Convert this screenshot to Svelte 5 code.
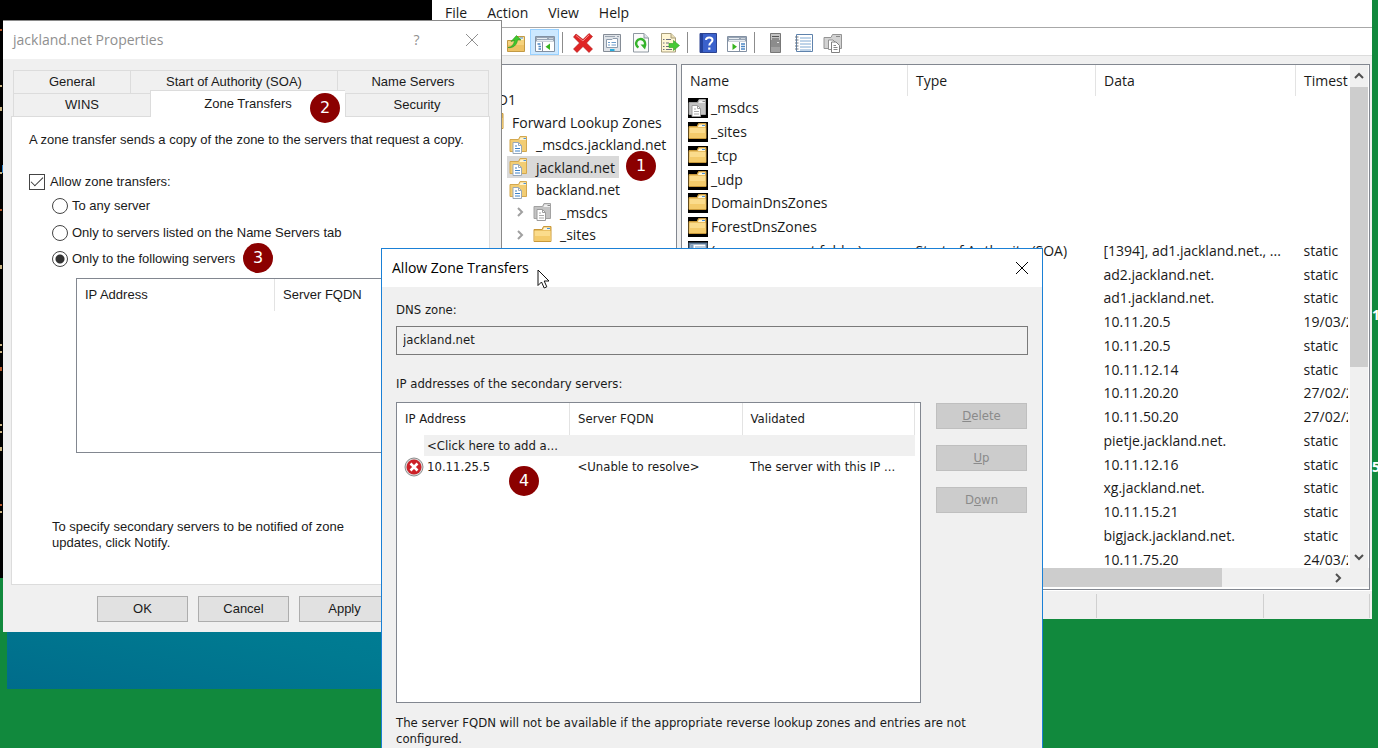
<script lang="ts">
	interface TreeItem {
		name: string;
		level: number;
		icon?: string;
		selected?: boolean;
	}

	interface DnsRecord {
		name?: string;
		icon?: string;
		type?: string;
		data?: string;
		time?: string;
	}

	const menus = ['File', 'Action', 'View', 'Help'];

	const tools = [
		['up', 'tree'],
		['delete', 'properties', 'refresh', 'export'],
		['help', 'pane'],
		['server', 'list', 'copy']
	];

	const tree: TreeItem[] = [
		{ name: 'AD1', level: 0 },
		{ name: 'Forward Lookup Zones', level: 1, icon: 'folder' },
		{ name: '_msdcs.jackland.net', level: 2, icon: 'zone' },
		{ name: 'jackland.net', level: 2, icon: 'zone', selected: true },
		{ name: 'backland.net', level: 2, icon: 'zone' },
		{ name: '_msdcs', level: 3, icon: 'delegation' },
		{ name: '_sites', level: 3, icon: 'folder' }
	];

	const records: DnsRecord[] = [
		{ name: '_msdcs', icon: 'delegation' },
		{ name: '_sites', icon: 'folder' },
		{ name: '_tcp', icon: 'folder' },
		{ name: '_udp', icon: 'folder' },
		{ name: 'DomainDnsZones', icon: 'folder' },
		{ name: 'ForestDnsZones', icon: 'folder' },
		{
			name: '(same as parent folder)',
			icon: 'record',
			type: 'Start of Authority (SOA)',
			data: '[1394], ad1.jackland.net., ...',
			time: 'static'
		},
		{ data: 'ad2.jackland.net.', time: 'static' },
		{ data: 'ad1.jackland.net.', time: 'static' },
		{ data: '10.11.20.5', time: '19/03/2' },
		{ data: '10.11.20.5', time: 'static' },
		{ data: '10.11.12.14', time: 'static' },
		{ data: '10.11.20.20', time: '27/02/2' },
		{ data: '10.11.50.20', time: '27/02/2' },
		{ data: 'pietje.jackland.net.', time: 'static' },
		{ data: '10.11.12.16', time: 'static' },
		{ data: 'xg.jackland.net.', time: 'static' },
		{ data: '10.11.15.21', time: 'static' },
		{ data: 'bigjack.jackland.net.', time: 'static' },
		{ data: '10.11.75.20', time: '24/03/2' }
	];

	const specks = [31, 87, 109, 174, 211, 267, 346, 353, 369, 426, 433, 449, 506, 513];

	let allowTransfers = $state(true);
	let target = $state('listed');
	let zone = $state('jackland.net');
</script>

{#snippet icon(name: string)}
	<svg class="icon" viewBox="0 0 20 20" width="20" height="20" aria-hidden="true">
		{#if name === 'folder'}
			<path d="M1 4.5V16.5H18V1.5H10.500L9 4.5Z" fill="#e9bf62" stroke="#c9993a" />
			<path d="M11 2.500H17V5H10Z" fill="#fff6d8" />
			<path d="M14 3.500H17" stroke="#4b93d8" />
			<path d="M1.500 6H17.500V16H1.500Z" fill="#fbdc8c" />
			<path d="M2 11H17.500V16H2Z" fill="#f4cb6b" />
		{:else if name === 'zone' || name === 'delegation'}
			{@const gray = name === 'delegation'}
			<path d="M1 4.5V16.5H17.500V1.5H11L9.5 4.5Z" fill={gray ? '#c3c3c3' : '#f2cd74'} stroke={gray ? '#a2a2a2' : '#d3a850'} />
			<path d="M11.5 2.5H17V5H10.5Z" fill={gray ? '#eee' : '#fff3cf'} />
			<path d="M14.5 3.5H17" stroke={gray ? '#888' : '#4b93d8'} />
			<path d="M4 7.5H9.500L12.500 10.500V18.500H4Z" fill="#fff" stroke={gray ? '#9c9c9c' : '#98a8b8'} />
			<path d="M9.500 7.5V10.500H12.500" fill="none" stroke={gray ? '#9c9c9c' : '#98a8b8'} />
			<path d="M6 11H8M6 13.500H11M6 16H11" stroke={gray ? '#aaa' : '#3c82c8'} />
		{:else if name === 'record'}
			<path d="M1.5 2.5H18.5V18.5H1.5Z" fill="#fff" stroke="#5c7896" stroke-width="2" />
			<path d="M3 4H5V18H3ZM7 6H17" fill="#7f9dbd" stroke="#7f9dbd" />
		{:else if name === 'up'}
			<path d="M1.5 7.5V18.5H18.5V3.5H11L10 7.5Z" fill="#f6d27c" stroke="#c39a45" />
			<path d="M12 4.5H17.5V7H11Z" fill="#fff6d8" />
			<path d="M13.500 5H17" stroke="#4b93d8" />
			<path d="M2 12H18V18H2Z" fill="#eec264" />
			<path d="M2 14.500C6 14 8 11.500 8.500 7.500L5 8.500L10.500 2.500L15 7L11.500 7C11 12 7 15.500 2 14.500Z" fill="#3fc72c" stroke="#2b9420" stroke-width=".6" />
		{:else if name === 'tree' || name === 'pane'}
			<path d="M.5 3.500H19.500V18.500H.5Z" fill="#fff" stroke="#8290a2" />
			<path d="M1 4H19V8.500H1Z" fill="#98a5b5" />
			<path d="M2 5.500H12M2 7.500H18" stroke="#e8edf2" />
			<path d="M14.500 5.500H15.500M16.500 5.500H17.500" stroke="#fff" />
			{#if name === 'tree'}
				<path d="M7.500 9V18" stroke="#8290a2" />
				<path d="M2.500 11H5.500M3.500 13.500H6M3.500 16H6" stroke="#4b86c4" stroke-width="1.300" />
				<path d="M15 10.500V17L10.500 13.700Z" fill="#36b51f" />
			{:else}
				<path d="M12.500 9V18" stroke="#8290a2" />
				<path d="M14 11H18M14 13.500H18M14 16H18" stroke="#4b86c4" stroke-width="1.300" />
				<path d="M5.500 10.500V17L10 13.700Z" fill="#36b51f" />
			{/if}
		{:else if name === 'delete'}
			<path d="M3 1L10 6.500L16 .5L19.500 3.500L13.500 10L19.500 16L16 19.500L10 13.500L4 19.500L.5 16L6.500 10L.5 4Z" fill="#e02424" stroke="#b01414" stroke-width=".6" />
			<path d="M3 2.500L10 8L16 2" fill="none" stroke="#f58080" />
		{:else if name === 'properties'}
			<path d="M1.500 1.500H18.500V18.500H1.500Z" fill="#dfe3e8" stroke="#858c96" />
			<path d="M3 3.500H13M15 3.500H17" stroke="#9aa4b0" />
			<path d="M4.500 6.500H10L11 5.500H15.500V14.500H4.500Z" fill="#fff" stroke="#8e9cac" />
			<path d="M6 9.500H8M9.500 9.500H14M6 12H8M9.500 12H14" stroke="#6d9dcc" />
			<path d="M8 17H12.500" stroke="#28aee0" stroke-width="2" />
		{:else if name === 'refresh'}
			<path d="M2.500 .5H13L17.500 5V19H2.500Z" fill="#fbfbfb" stroke="#8f98a1" />
			<path d="M13 .5V5H17.500" fill="#dde2e7" stroke="#8f98a1" />
			<path d="M7.500 14.500A4.500 4.500 0 1 1 13 13.500" fill="none" stroke="#35b32b" stroke-width="2.400" />
			<path d="M9.500 11.500L15.500 11.500L14 16.500Z" fill="#35b32b" />
		{:else if name === 'export'}
			<path d="M1.500 .5H11L15.500 5V19H1.500Z" fill="#fff6d4" stroke="#a89e7c" />
			<path d="M11 .5V5H15.500" fill="#e9ddb2" stroke="#a89e7c" />
			<path d="M3 6.500H4.500M6 6.500H11M3 10H4.500M6 10H9M3 13.500H4.500M6 13.500H9M3 16.500H4.500M6 16.500H12" stroke="#6a6e7e" />
			<path d="M9 10.500H13.500V7.500L19.500 12.500L13.500 17.500V14.500H9Z" fill="#45c935" stroke="#2e9e24" stroke-width=".6" />
		{:else if name === 'help'}
			<path d="M2 .5H18.500V19.500H2Z" fill="#3b62cc" stroke="#2c4390" />
			<path d="M2 1H5V19H2Z" fill="#24429c" />
			<path d="M8 7C8 3.500 14.500 3.500 14.500 7C14.500 9.500 11.300 9.500 11.300 12.500" fill="none" stroke="#fff" stroke-width="2" />
			<path d="M10.200 14.500H12.400V16.700H10.200Z" fill="#fff" />
		{:else if name === 'server'}
			<path d="M5.500 .5H15.500V19.500H5.500Z" fill="#8c8c8c" stroke="#777" />
			<path d="M6 1H15V7H6Z" fill="#c4c4c4" />
			<path d="M7 3.500H14M7 6H14" stroke="#555" />
			<path d="M12 9.500H14" stroke="#ddd" />
			<path d="M6 14H15V19H6Z" fill="#a2a2a2" />
		{:else if name === 'list'}
			<path d="M2.500 1.500H18.500V18.500H2.500Z" fill="#fff" stroke="#5e82ac" />
			<path d="M6 5H17M6 8H17M6 11H17M6 14H17M6 17H17" stroke="#7fa8d2" />
			<path d="M1 4H4.500M1 7H4.500M1 10H4.500M1 13H4.500M1 16H4.500" stroke="#6f7781" />
		{:else}
			<path d="M1 4.500V15.500H18.500V1.500H9.500L8 4.500Z" fill="#d2d2d2" stroke="#949494" />
			<path d="M13 3.500H17" stroke="#888" />
			<path d="M5.500 7H10L12.500 9.500V16.500H5.500Z" fill="#fff" stroke="#909090" />
			<path d="M8.500 9H13L16.500 12.500V19.500H8.500Z" fill="#fff" stroke="#808080" />
			<path d="M10.500 12.500H13M10.500 14.500H14.500M10.500 16.500H14.500" stroke="#888" />
		{/if}
	</svg>
{/snippet}

{#snippet cross()}
	<svg viewBox="0 0 14 14" width="14" height="14" aria-hidden="true">
		<path d="M1 1L13 13M13 1L1 13" stroke="currentColor" fill="none" />
	</svg>
{/snippet}

{#snippet chevron(turn: string)}
	<svg class="chevron {turn}" viewBox="0 0 10 10" width="10" height="10" aria-hidden="true">
		<path d="M1 7L5 3L9 7" stroke="currentColor" stroke-width="2" fill="none" />
	</svg>
{/snippet}

<main class="desktop">
	<div class="terminal">
		<svg width="3" height="578" aria-hidden="true">
			{#each specks as y, i}
				<rect x="0" y={y - 2} width="2" height={i % 3 === 2 ? 4 : 2} fill={i % 4 === 0 ? '#b5562a' : '#c9b382'} />
			{/each}
			<rect x="2" y="165" width="1" height="8" fill="#2a7cc0" />
		</svg>
	</div>
	<div class="wallpaper"></div>
	<div class="side-label first">1</div>
	<div class="side-label second">5</div>

	<section class="window console">
		<nav class="menubar">
			{#each menus as menu}
				<button>{menu}</button>
			{/each}
		</nav>
		<div class="toolbar">
			{#each tools as group}
				<div class="group">
					{#each group as tool}
						<button class:active={tool === 'tree'} aria-label={tool}>{@render icon(tool)}</button>
					{/each}
				</div>
			{/each}
		</div>
		<div class="panes">
			<ul class="tree">
				{#each tree as item}
					<li class="level-{item.level}">
						{#if item.level === 3}
							{@render chevron('right')}
						{/if}
						<span class="node" class:selected={item.selected}>
							{#if item.icon}
								{@render icon(item.icon)}
							{/if}
							<span>{item.name}</span>
						</span>
					</li>
				{/each}
			</ul>
			<div class="list">
				<div class="list-body">
					<div class="list-view">
						<table>
							<thead>
								<tr>
									<th class="col-name">Name</th>
									<th class="col-type">Type</th>
									<th class="col-data">Data</th>
									<th>Timest</th>
								</tr>
							</thead>
							<tbody>
								{#each records as record}
									<tr>
										<td class="name">
											{#if record.icon}
												<div class="entry-name">
													<span class="tile">{@render icon(record.icon)}</span>
													<span>{record.name}</span>
												</div>
											{/if}
										</td>
										<td>{record.type ?? ''}</td>
										<td>{record.data}</td>
										<td>{record.time}</td>
									</tr>
								{/each}
							</tbody>
						</table>
					</div>
					<div class="vscroll">
						<div class="arrow">{@render chevron('up')}</div>
						<div class="thumb"></div>
						<div class="arrow end">{@render chevron('down')}</div>
					</div>
				</div>
				<div class="hscroll">
					<div class="thumb"></div>
					<div class="arrow">{@render chevron('right')}</div>
				</div>
			</div>
		</div>
		<div class="statusbar">
			<span></span>
			<span></span>
			<span></span>
		</div>
	</section>

	<section class="window properties">
		<header>
			<h1>jackland.net Properties</h1>
			<button aria-label="Help">?</button>
			<button aria-label="Close">{@render cross()}</button>
		</header>
		<div class="tabs">
			<div class="tab-row">
				<button class="general">General</button>
				<button class="soa">Start of Authority (SOA)</button>
				<button class="servers">Name Servers</button>
			</div>
			<div class="tab-row">
				<button class="wins">WINS</button>
				<button class="transfers">Zone Transfers</button>
				<button class="security">Security</button>
			</div>
		</div>
		<div class="page">
			<p class="intro">A zone transfer sends a copy of the zone to the servers that request a copy.</p>
			<label class="check">
				<input type="checkbox" bind:checked={allowTransfers} />
				Allow zone transfers:
			</label>
			<div class="radios">
				<label><input type="radio" value="any" bind:group={target} /> To any server</label>
				<label class="middle"><input type="radio" value="ns" bind:group={target} /> Only to servers listed on the Name Servers tab</label>
				<label><input type="radio" value="listed" bind:group={target} /> Only to the following servers</label>
			</div>
			<div class="server-box">
				<table>
					<thead>
						<tr><th class="ip">IP Address</th><th>Server FQDN</th></tr>
					</thead>
				</table>
			</div>
			<p class="notify">To specify secondary servers to be notified of zone updates, click Notify.</p>
		</div>
		<footer>
			<button>OK</button>
			<button>Cancel</button>
			<button>Apply</button>
		</footer>
	</section>

	<section class="window allow">
		<header>
			<h1>Allow Zone Transfers</h1>
			<button aria-label="Close">{@render cross()}</button>
		</header>
		<div class="content">
			<label for="zone">DNS zone:</label>
			<input id="zone" type="text" readonly bind:value={zone} />
			<p class="caption">IP addresses of the secondary servers:</p>
			<div class="columns">
				<div class="addresses">
					<table>
						<thead>
							<tr>
								<th>IP Address</th>
								<th>Server FQDN</th>
								<th>Validated</th>
							</tr>
						</thead>
						<tbody>
							<tr class="add">
								<td><span class="entry">&lt;Click here to add a...</span></td>
								<td></td>
								<td></td>
							</tr>
							<tr>
								<td>
									<span class="status">
										<svg viewBox="0 0 20 20" width="20" height="20" aria-hidden="true">
											<circle cx="10" cy="10" r="9" fill="#d9d9d9" stroke="#8d8d8d" />
											<circle cx="10" cy="10" r="7.500" fill="#cc2027" />
											<path d="M6.500 6.500L13.500 13.500M13.500 6.500L6.500 13.500" stroke="#fff" stroke-width="2.600" />
										</svg>
										10.11.25.5
									</span>
								</td>
								<td>&lt;Unable to resolve&gt;</td>
								<td>The server with this IP ...</td>
							</tr>
						</tbody>
					</table>
				</div>
				<div class="actions">
					<button disabled><u>D</u>elete</button>
					<button disabled><u>U</u>p</button>
					<button disabled>D<u>o</u>wn</button>
				</div>
			</div>
			<p class="note">The server FQDN will not be available if the appropriate reverse lookup zones and entries are not configured.</p>
		</div>
	</section>

	<div class="callout one">1</div>
	<div class="callout two">2</div>
	<div class="callout three">3</div>
	<div class="callout four">4</div>

	<svg class="cursor" viewBox="0 0 13 20" width="13" height="20" aria-hidden="true">
		<path d="M1 1V16.500L4.500 13L7.200 19L9.800 17.800L7.200 12H12Z" fill="#fff" stroke="#111" />
	</svg>
</main>

<style>
	:global(body) {
		margin: 0;
		background: #11893d;
	}

	.desktop {
		position: relative;
		min-height: 100vh;
		overflow: hidden;
		background: #11893d;
		color: #1a1a1a;
		font-family: 'Open Sans', 'Noto Sans', sans-serif;
		font-size: 14px;
	}

	h1, p, ul {
		margin: 0;
		padding: 0;
		font-weight: 400;
	}

	button {
		padding: 0;
		border: 0;
		background: none;
		color: inherit;
		font: inherit;
	}

	svg {
		display: block;
		flex: none;
	}

	table {
		width: 100%;
		border-collapse: collapse;
		table-layout: fixed;
	}

	th, td {
		padding: 0 0 0 8px;
		font-weight: 400;
		text-align: left;
		white-space: nowrap;
		overflow: hidden;
	}

	.terminal {
		position: absolute;
		top: 0;
		left: 0;
		width: 432px;
		height: 578px;
		background: #000;
	}

	.wallpaper {
		position: absolute;
		top: 600px;
		left: 7px;
		width: 400px;
		height: 89px;
		background: linear-gradient(12deg, #006c8b, #007a91 60%, #007f96);
	}

	.side-label {
		position: absolute;
		left: calc(100% - 6px);
		color: #fff;
		font-size: 14px;
		font-weight: 700;
		line-height: 20px;
	}

	.first {
		top: 305px;
	}

	.second {
		top: 457px;
	}

	.window {
		position: absolute;
		box-sizing: border-box;
		background: #f0f0f0;
	}

	/* DNS Manager */
	.console {
		top: 0;
		left: 432px;
		right: 6px;
	}

	.menubar {
		display: flex;
		gap: 20px;
		box-sizing: border-box;
		height: 28px;
		padding: 0 0 3px 13px;
		background: #fff;
		border-bottom: 1px solid #a8a8a8;
	}

	.toolbar {
		display: flex;
		height: 27px;
		padding-left: 69px;
		background: #fff;
		border-bottom: 1px solid #dcdcdc;
	}

	.group {
		display: flex;
		align-items: flex-end;
	}

	.group + .group {
		margin-left: 3px;
		padding-left: 6px;
		background: linear-gradient(#8c8c8c, #8c8c8c) 0 4px / 1px 21px no-repeat;
	}

	.group button {
		display: grid;
		place-items: center;
		box-sizing: border-box;
		width: 29px;
		height: 26px;
		padding-top: 2px;
	}

	.group .active {
		border: 1px solid #99d1ff;
		background: #cce8ff;
	}

	.panes {
		display: flex;
		gap: 4px;
		height: 526px;
		padding: 8px 2px 0 0;
	}

	.tree {
		box-sizing: border-box;
		flex: none;
		width: 245px;
		padding-top: 23px;
		border: 1px solid #828790;
		background: #fff;
		list-style: none;
		overflow: hidden;
	}

	.tree li {
		display: flex;
		align-items: center;
		height: 23px;
		white-space: nowrap;
	}

	.tree li:nth-child(even) {
		height: 22px;
	}

	.node {
		display: flex;
		align-items: center;
		gap: 7px;
		height: 22px;
		padding: 0 4px 0 2px;
	}

	.selected {
		background: #d9d9d9;
	}

	.level-0 {
		padding-left: 54px;
	}

	.level-1 {
		padding-left: 50px;
	}

	.level-2 {
		padding-left: 74px;
	}

	.level-3 {
		padding-left: 82px;
		gap: 6px;
	}

	.tree .chevron {
		color: #a0a0a0;
	}

	.chevron {
		color: #505050;
	}

	.right {
		transform: rotate(90deg);
	}

	.down {
		transform: rotate(180deg);
	}

	.list {
		display: flex;
		flex: 1;
		flex-direction: column;
		min-width: 0;
		border: 1px solid #828790;
		background: #fff;
	}

	.list-body {
		display: flex;
		flex: 1;
		min-height: 0;
	}

	.list-view {
		flex: 1;
		min-width: 0;
		margin-right: 2px;
		overflow: hidden;
	}

	.list th {
		height: 31px;
		border-right: 1px solid #e3e3e3;
	}

	.list th:last-child {
		border: 0;
	}

	.list td {
		height: 24px;
		line-height: 20px;
	}

	.list tr:nth-child(4n) td {
		height: 23px;
	}

	.col-name {
		width: 217px;
	}

	.col-type {
		width: 179px;
	}

	.col-data {
		width: 191px;
	}

	.list .name {
		padding-left: 6px;
	}

	.entry-name {
		display: flex;
		align-items: center;
		gap: 3px;
	}

	.tile {
		background: #000;
	}

	.vscroll {
		display: flex;
		flex-direction: column;
		width: 18px;
		margin-right: 1px;
		background: #f0f0f0;
	}

	.vscroll .thumb {
		height: 280px;
		background: #cdcdcd;
	}

	.arrow {
		display: grid;
		place-items: center;
		width: 18px;
		height: 22px;
	}

	.end {
		margin-top: auto;
	}

	.hscroll {
		display: flex;
		justify-content: space-between;
		height: 19px;
		padding-right: 22px;
		margin-bottom: 2px;
		background: #f0f0f0;
	}

	.hscroll .thumb {
		width: 540px;
		background: #cdcdcd;
	}

	.hscroll .arrow {
		height: 19px;
	}

	.statusbar {
		display: flex;
		height: 24px;
		padding: 3px 2px 1px 0;
		border-top: 1px solid #fff;
	}

	.statusbar span {
		flex: none;
		width: 166px;
		border-right: 1px solid #d0d0d0;
	}

	.statusbar span:first-child {
		width: 664px;
	}

	.statusbar span:last-child {
		flex: 1;
	}

	/* Zone properties */
	.properties {
		top: 20px;
		left: 3px;
		width: 499px;
		border: solid #8a8a8a;
		border-width: 1px 1px 0 0;
		font-family: 'Liberation Sans', Arial, sans-serif;
		font-size: 13px;
		line-height: 16px;
	}

	header {
		display: flex;
		align-items: center;
		height: 38px;
		background: #fff;
		font-family: 'Open Sans', 'Noto Sans', sans-serif;
		font-size: 14px;
	}

	header h1 {
		flex: 1;
		padding-left: 10px;
		font-size: 14px;
	}

	header button {
		display: grid;
		place-items: center;
		width: 55px;
		height: 36px;
	}

	.properties header {
		padding-right: 2px;
		color: #8f8f8f;
	}

	.tabs {
		padding: 11px 12px 0 10px;
	}

	.tab-row {
		display: flex;
		height: 23px;
	}

	.tab-row button {
		box-sizing: border-box;
		border: 1px solid #dcdcdc;
		border-width: 1px 0 0 1px;
	}

	.tab-row button:last-child {
		flex: 1;
		border-right-width: 1px;
	}

	.general {
		width: 117px;
	}

	.soa {
		width: 207px;
	}

	.wins {
		width: 137px;
	}

	.tab-row .transfers {
		z-index: 1;
		width: 195px;
		height: 27px;
		margin-top: -3px;
		background: #fff;
	}

	.page {
		box-sizing: border-box;
		height: 469px;
		margin: 0 11px 0 8px;
		padding: 15px 14px 0 17px;
		border: 1px solid #dcdcdc;
		background: #fff;
	}

	.intro {
		white-space: nowrap;
	}

	.check {
		display: flex;
		align-items: center;
		gap: 5px;
		margin-top: 26px;
	}

	.page input {
		box-sizing: border-box;
		width: 16px;
		height: 16px;
		margin: 0;
		appearance: none;
		border: 1px solid #444;
		background: #fff;
	}

	.page input[type='checkbox']:checked {
		display: grid;
		place-items: center;
	}

	.page input[type='checkbox']:checked::before {
		box-sizing: border-box;
		width: 12px;
		height: 6px;
		margin-bottom: 4px;
		border: solid #333;
		border-width: 0 0 1px 1px;
		transform: rotate(-45deg);
		content: '';
	}

	.page input[type='radio'] {
		border-radius: 50%;
	}

	.page input[type='radio']:checked {
		background: radial-gradient(circle, #333 4px, #fff 5px);
	}

	.radios {
		display: grid;
		gap: 10px;
		padding: 8px 0 0 23px;
	}

	.radios label {
		display: flex;
		align-items: center;
		gap: 4px;
	}

	.radios .middle {
		margin-top: 1px;
	}

	.server-box {
		box-sizing: border-box;
		height: 175px;
		margin: 11px 0 0 47px;
		border: 1px solid #828790;
	}

	.server-box th {
		height: 32px;
	}

	.server-box .ip {
		width: 189px;
		border-right: 1px solid #e3e3e3;
	}

	.notify {
		width: 320px;
		margin: 66px 0 0 23px;
	}

	footer {
		display: flex;
		gap: 10px;
		padding: 11px 0 10px 94px;
	}

	footer button, .actions button {
		box-sizing: border-box;
		width: 91px;
		height: 26px;
		border: 1px solid #adadad;
		background: #e1e1e1;
	}

	/* Allow Zone Transfers */
	.allow {
		top: 248px;
		left: 381px;
		width: 662px;
		height: 540px;
		border: 1px solid #1a80d6;
		font-family: 'DejaVu Sans Condensed', Tahoma, sans-serif;
		font-size: 13px;
		line-height: 16px;
	}

	.allow header {
		color: #000;
	}

	.allow header button {
		width: 40px;
	}

	.content {
		padding: 15px 14px 0;
	}

	.content > label {
		display: block;
	}

	.content input {
		box-sizing: border-box;
		width: 100%;
		height: 29px;
		margin-top: 8px;
		padding: 0 6px 3px;
		border: 1px solid #7a7a7a;
		background: #f0f0f0;
		color: inherit;
		font: inherit;
	}

	.caption {
		margin-top: 21px;
	}

	.columns {
		display: flex;
		justify-content: space-between;
		margin-top: 10px;
		padding-right: 1px;
	}

	.addresses {
		box-sizing: border-box;
		width: 525px;
		height: 301px;
		padding-right: 5px;
		border: 1px solid #828790;
		background: #fff;
	}

	.addresses th {
		height: 32px;
		border-right: 1px solid #e3e3e3;
	}

	.addresses td {
		height: 21px;
	}

	.add {
		background: linear-gradient(#f0f0f0, #f0f0f0) 27px 0 no-repeat;
	}

	.entry {
		padding-left: 22px;
	}

	.status {
		display: flex;
		align-items: center;
		gap: 3px;
		margin-left: -1px;
	}

	.actions {
		display: flex;
		flex-direction: column;
		gap: 16px;
		padding-top: 1px;
	}

	.actions button {
		border-color: #bfbfbf;
		background: #ccc;
		color: #8a8a8a;
	}

	.note {
		margin-top: 12px;
	}

	/* Step markers */
	.callout {
		position: absolute;
		z-index: 2;
		width: 30px;
		height: 30px;
		border-radius: 50%;
		background: #8b0000;
		color: #fff;
		font-family: 'DejaVu Sans', sans-serif;
		font-size: 16px;
		line-height: 30px;
		text-align: center;
	}

	.one {
		top: 151px;
		left: 626px;
	}

	.two {
		top: 93px;
		left: 310px;
	}

	.three {
		top: 243px;
		left: 243px;
	}

	.four {
		top: 466px;
		left: 509px;
	}

	.cursor {
		position: absolute;
		top: 269px;
		left: 537px;
	}
</style>
